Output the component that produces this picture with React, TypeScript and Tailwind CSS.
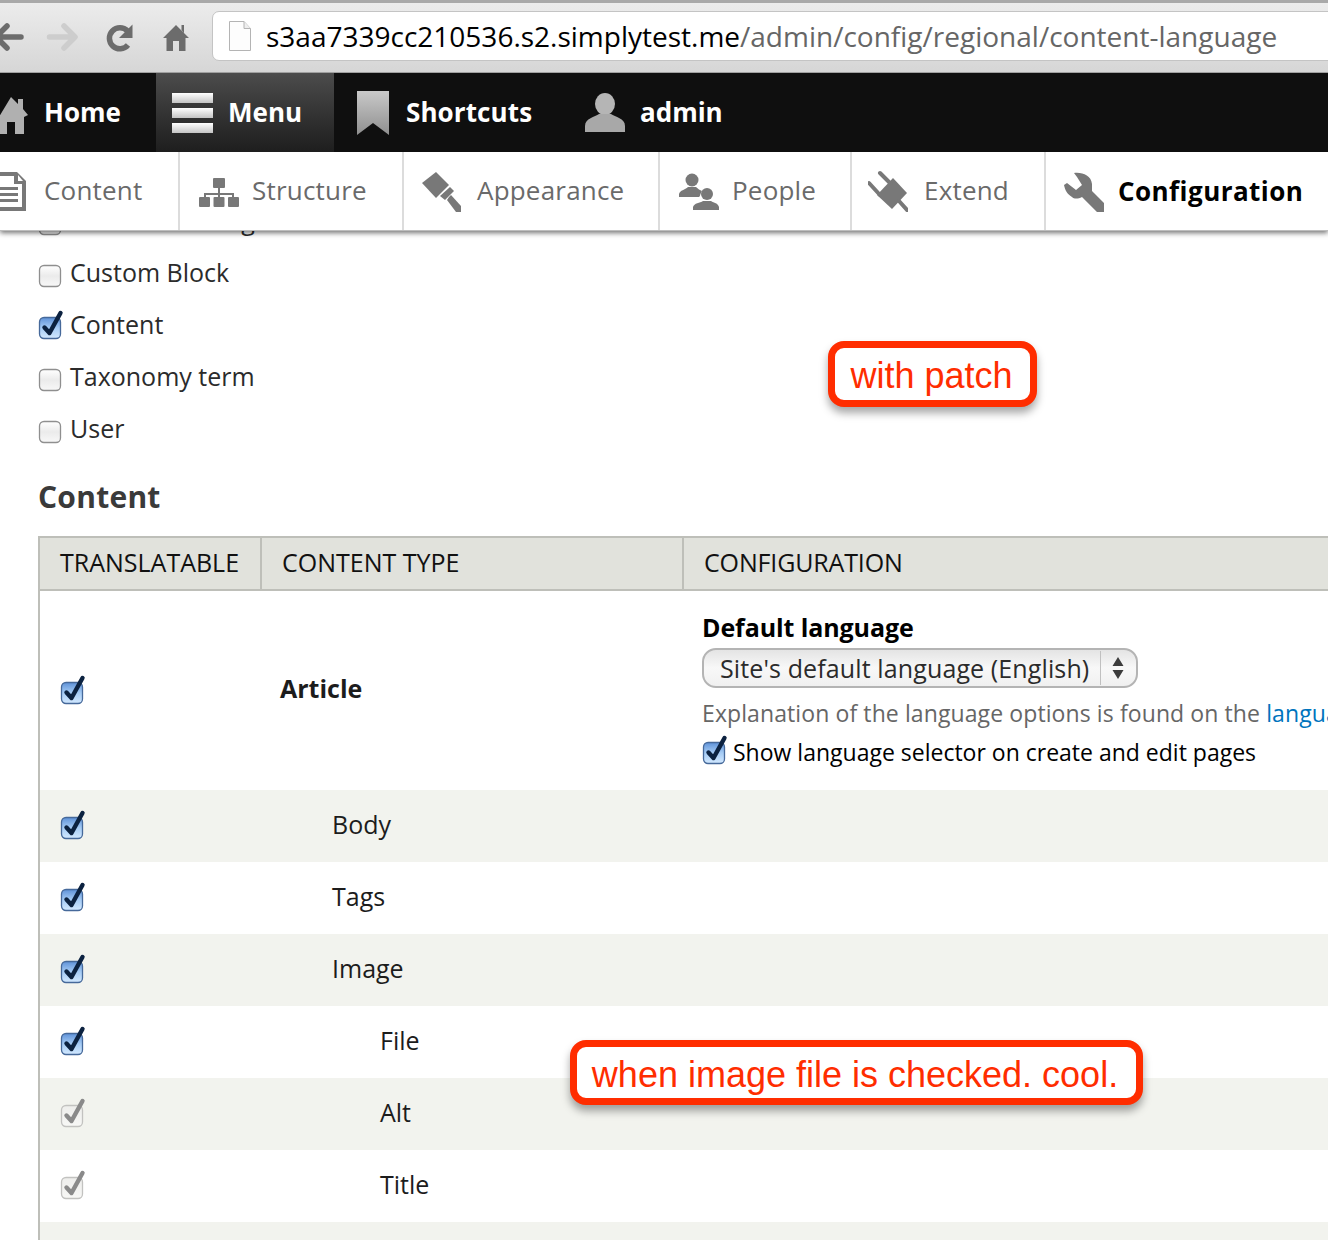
import React from "react";

function Check({ state = "off" }: { state?: "off" | "on" | "disabled" }) {
  const id = React.useId();
  const stops =
    state === "on"
      ? ["#5f92d8", "#a6ccf5", "#d3e9ff"]
      : state === "disabled"
      ? ["#eeeeec", "#f2f2f0", "#f8f8f6"]
      : ["#ffffff", "#ebebeb", "#f8f8f8"];
  const border = state === "on" ? "#46699a" : state === "disabled" ? "#c2c2c0" : "#8f8f8f";
  return (
    <svg width="28" height="32" viewBox="0 0 28 32" className="block shrink-0">
      <defs>
        <linearGradient id={id} x1="0" y1="0" x2="0" y2="1">
          <stop offset="0" stopColor={stops[0]} />
          <stop offset="0.5" stopColor={stops[1]} />
          <stop offset="1" stopColor={stops[2]} />
        </linearGradient>
      </defs>
      <rect x="1.5" y="8.5" width="21" height="21" rx="4.5" fill={`url(#${id})`} stroke={border} strokeWidth="1.3" />
      {state !== "off" && (
        <path
          d="M6.5 18.5 L11.5 24 L22.5 4"
          fill="none"
          stroke={state === "on" ? "#0c2240" : "#8a8a8a"}
          strokeWidth="4.4"
          strokeLinecap="round"
          strokeLinejoin="round"
        />
      )}
    </svg>
  );
}

function ToolbarIcon({ kind }: { kind: string }) {
  if (kind === "home")
    return (
      <svg width="32" height="44" viewBox="0 0 32 44" className="block shrink-0">
        <path d="M14 6 L21 13 V8 H26 V18 L31 24 L27 26 V43 H18 V31 H10 V43 H2 V26 Z" fill="#b0b0b0" />
      </svg>
    );
  if (kind === "menu")
    return (
      <svg width="42" height="42" viewBox="0 0 42 42" className="block shrink-0">
        <defs>
          <linearGradient id="mbar" x1="0" y1="0" x2="0" y2="1">
            <stop offset="0" stopColor="#ffffff" />
            <stop offset="1" stopColor="#c4c4c4" />
          </linearGradient>
        </defs>
        <rect x="0" y="1" width="41" height="10" fill="url(#mbar)" />
        <rect x="0" y="16" width="41" height="10" fill="url(#mbar)" />
        <rect x="0" y="31" width="41" height="10" fill="url(#mbar)" />
      </svg>
    );
  if (kind === "bookmark")
    return (
      <svg width="34" height="46" viewBox="0 0 34 46" className="block shrink-0">
        <defs>
          <linearGradient id="bm" x1="0" y1="0" x2="0" y2="1">
            <stop offset="0" stopColor="#c9c9c9" />
            <stop offset="1" stopColor="#8f8f8f" />
          </linearGradient>
        </defs>
        <path d="M1 1 H33 V45 L17 33 L1 45 Z" fill="url(#bm)" />
      </svg>
    );
  return (
    <svg width="40" height="40" viewBox="0 0 40 40" className="block shrink-0">
      <ellipse cx="20" cy="11" rx="10" ry="11" fill="#b5b5b5" />
      <path d="M0 33 C0 25 10 24 14 21 H26 C30 24 40 25 40 33 V39 H0 Z" fill="#a8a8a8" />
    </svg>
  );
}

function TrayIcon({ kind }: { kind: string }) {
  const c = "#787878";
  const wrap = (w: number, children: React.ReactNode) => (
    <svg width={w} height="42" viewBox={`0 0 ${w} 42`} className="block shrink-0">
      {children}
    </svg>
  );
  if (kind === "content")
    return wrap(
      27,
      <>
        <path d="M0 2 H17 L26 11 V41 H0 Z" fill={c} />
        <path d="M18 5 L23 11 H18 Z" fill="#fff" />
        <path d="M0 6 H14 V14 H22 V37 H0 Z" fill="#fff" />
        <path d="M0 17 H18 V20 H0 Z M0 23 H18 V26 H0 Z M0 29 H18 V32 H0 Z" fill={c} />
      </>
    );
  if (kind === "structure")
    return wrap(
      40,
      <>
        <rect x="14" y="8" width="12" height="10" rx="1" fill={c} />
        <path d="M19 18 H21 V23 H35 V28 H33 V25 H21 V28 H19 V25 H7 V28 H5 V23 H19 Z" fill={c} />
        <rect x="0" y="27" width="11" height="10" rx="1" fill={c} />
        <rect x="14.5" y="27" width="11" height="10" rx="1" fill={c} />
        <rect x="29" y="27" width="11" height="10" rx="1" fill={c} />
      </>
    );
  if (kind === "appearance")
    return wrap(
      40,
      <>
        <path d="M0 13 L14 2 L27 15 L14 28 Z" fill={c} />
        <path d="M18 26 L28 17 L32 21 L23 30 Z" fill={c} />
        <path d="M27 27 L29 25 L39 36 V42 H34 L25 30 Z" fill={c} />
      </>
    );
  if (kind === "people")
    return wrap(
      40,
      <>
        <circle cx="13" cy="10" r="6.5" fill={c} />
        <path d="M0 27 V24 C1 20 6 20 9 17 H17 C19 19 21 20 23 21 C21 24 21 27 20 27 Z" fill={c} />
        <circle cx="28" cy="24" r="6" fill={c} />
        <path d="M14 40 V37 C15 33 21 33 24 31 H32 C35 33 39 33 40 37 V40 Z" fill={c} />
      </>
    );
  if (kind === "extend")
    return wrap(
      40,
      <>
        <path d="M25 8 L39 23 L24 39 L9 25 Z" fill={c} />
        <path d="M1 13 L12 25 M12 3 L23 14 M31 31 L39 40" stroke={c} strokeWidth="4" strokeLinecap="round" />
      </>
    );
  return wrap(
    40,
    <path
      d="M10 3 C18 2 27 5 28 14 L28 21 L40 33 V42 H33 L18 27 C14 29 10 29 8 27 C3 24 1 20 0 15 L3 13 L12 20 L18 15 L13 7 Z"
      fill={c}
    />
  );
}

const tray = [
  { k: "content", t: "Content", w: "w-[180px]", pl: "pl-0", gap: "gap-[17px]" },
  { k: "structure", t: "Structure", w: "w-[224px]", pl: "pl-[19px]", gap: "gap-[13px]" },
  { k: "appearance", t: "Appearance", w: "w-[256px]", pl: "pl-[18px]", gap: "gap-[15px]" },
  { k: "people", t: "People", w: "w-[192px]", pl: "pl-[19px]", gap: "gap-[13px]" },
  { k: "extend", t: "Extend", w: "w-[194px]", pl: "pl-[16px]", gap: "gap-[16px]" },
];

const rows: { label: string; pad: string; state: "on" | "disabled"; bg: string }[] = [
  { label: "Body", pad: "pl-[70px]", state: "on", bg: "bg-[#f2f3ee]" },
  { label: "Tags", pad: "pl-[70px]", state: "on", bg: "bg-white" },
  { label: "Image", pad: "pl-[70px]", state: "on", bg: "bg-[#f2f3ee]" },
  { label: "File", pad: "pl-[118px]", state: "on", bg: "bg-white" },
  { label: "Alt", pad: "pl-[118px]", state: "disabled", bg: "bg-[#f2f3ee]" },
  { label: "Title", pad: "pl-[118px]", state: "disabled", bg: "bg-white" },
  { label: "", pad: "pl-[118px]", state: "disabled", bg: "bg-[#f2f3ee]" },
];

export default function App() {
  return (
    <div className="relative w-[1328px] h-[1240px] overflow-hidden bg-white font-['Open_Sans',sans-serif] text-[#2b2b2b]">
      {/* browser chrome */}
      <div className="relative z-30 h-[73px] bg-gradient-to-b from-[#ececec] to-[#d6d6d6] border-t-[3px] border-t-[#a9a9a9] border-b border-b-[#a0a0a0] flex items-center">
        <svg width="210" height="50" viewBox="0 12 210 50" className="block shrink-0 -mt-[2px]">
          <path d="M-4 37 H21 M7 26 L-4 37 L7 48" stroke="#6c6c6c" strokeWidth="5.5" strokeLinecap="round" strokeLinejoin="round" fill="none" />
          <path d="M49.5 37 H74 M64 26 L75 37 L64 48" stroke="#cdcdcd" strokeWidth="5.5" strokeLinecap="round" strokeLinejoin="round" fill="none" />
          <path d="M127.5 31 A10.5 10.5 0 1 0 128 45" stroke="#6c6c6c" strokeWidth="5.5" fill="none" />
          <path d="M132.5 24.5 V38 H119 Z" fill="#6c6c6c" />
          <path d="M176 25 L189 38 H185.5 V51 H179 V41 H173 V51 H166.5 V38 H163 Z M181.5 25 H184 V33 L181.5 30 Z" fill="#6c6c6c" />
        </svg>
        <div className="flex items-center ml-[2px] h-[50px] w-[1200px] shrink-0 -mt-[3px] bg-white border border-[#c4c4c4] rounded-[7px] pl-[16px]">
          <svg width="22" height="30" viewBox="0 0 22 30" className="block shrink-0">
            <path d="M0.5 0.5 H15 L21.5 7.5 V29.5 H0.5 Z" fill="#fdfdfd" stroke="#b4b4b4" />
            <path d="M15 0.5 V7.5 H21.5" fill="#eee" stroke="#b4b4b4" />
          </svg>
          <span className="ml-[15px] text-[28px] leading-none whitespace-nowrap text-[#666666]">
            <span className="text-black">s3aa7339cc210536.s2.simplytest.me</span>/admin/config/regional/content-language
          </span>
        </div>
      </div>

      {/* toolbar */}
      <div className="relative z-30 h-[79px] bg-[#0f0f0f] flex items-stretch text-white font-bold text-[26px]">
        <div className="w-[156px] flex items-center -ml-[3px] gap-[15px]">
          <ToolbarIcon kind="home" />
          <span>Home</span>
        </div>
        <div className="w-[178px] flex items-center pl-[16px] gap-[14px] bg-gradient-to-b from-[#4c4c4c] to-[#1e1e1e] ml-[3px]">
          <ToolbarIcon kind="menu" />
          <span>Menu</span>
        </div>
        <div className="w-[251px] flex items-center pl-[22px] gap-[16px]">
          <ToolbarIcon kind="bookmark" />
          <span className="tracking-[0.1px]">Shortcuts</span>
        </div>
        <div className="flex items-center gap-[15px]">
          <ToolbarIcon kind="user" />
          <span>admin</span>
        </div>
      </div>

      {/* tray */}
      <div className="relative z-20 h-[79px] bg-white flex items-stretch shadow-[0_2px_5px_rgba(0,0,0,0.55)] border-b border-b-[#bdbdbd] text-[26px] text-[#6a6a6a] tracking-[0.2px]">
        {tray.map((i) => (
          <div key={i.k} className={`${i.w} ${i.pl} ${i.gap} flex items-center border-r-2 border-r-[#dcdcdc] -mt-px`}>
            <TrayIcon kind={i.k} />
            <span>{i.t}</span>
          </div>
        ))}
        <div className="flex items-center pl-[18px] gap-[14px] text-black font-bold tracking-[0.45px]">
          <TrayIcon kind="configuration" />
          <span>Configuration</span>
        </div>
      </div>

      {/* content */}
      <div className="relative z-10 -mt-[37px] pl-[38px]">
        {[
          { t: "Contact message", s: "off" as const },
          { t: "Custom Block", s: "off" as const },
          { t: "Content", s: "on" as const },
          { t: "Taxonomy term", s: "off" as const },
          { t: "User", s: "off" as const },
        ].map((r) => (
          <div key={r.t} className="flex items-end h-[52px] gap-[4px] text-[25px] leading-[52px] text-[#2b2b2b]">
            <div className="pb-[9px]">
              <Check state={r.s} />
            </div>
            <span>{r.t}</span>
          </div>
        ))}

        <h2 className="mt-[23px] h-[40px] text-[30px] leading-[40px] font-bold tracking-[0.25px] text-[#3a3a3a]">Content</h2>

        {/* table */}
        <div className="mt-[19px] w-[1400px] border-l-2 border-l-[#bebfb9]">
          <div className="grid grid-cols-[222px_422px_1fr] h-[55px] -ml-[2px] bg-[#e1e2dc] border-2 border-[#bebfb9] text-[25px] text-[#111111] leading-[49px]">
            <div className="pl-[20px] border-r-2 border-r-[#bebfb9]">TRANSLATABLE</div>
            <div className="pl-[20px] border-r-2 border-r-[#bebfb9]">CONTENT TYPE</div>
            <div className="pl-[20px] tracking-[-0.15px]">CONFIGURATION</div>
          </div>

          <div className="grid grid-cols-[222px_422px_1fr] h-[199px] items-center bg-white">
            <div className="pl-[20px] -mt-[1px]">
              <Check state="on" />
            </div>
            <div className="pl-[18px] -mt-[3px] text-[25px] font-bold text-[#1c1c1c]">Article</div>
            <div className="pl-[18px] pt-[2px] whitespace-nowrap">
              <div className="text-[25px] font-bold leading-[32px] tracking-[-0.1px] text-black -mt-[3px]">Default language</div>
              <div className="mt-[5px] flex items-center w-[436px] h-[40px] rounded-[14px] border-2 border-[#b4b4b4] bg-gradient-to-b from-[#e4e4e4] via-[#f8f8f8] to-[#f0f0f0] text-[25px] text-[#2b2b2b]">
                <span className="pl-[16px] w-[397px] leading-[34px] tracking-[0.12px] border-r border-r-[#c0c0c0]">Site's default language (English)</span>
                <svg width="12" height="28" viewBox="0 0 12 28" className="block ml-[11px]">
                  <path d="M6 3 L11.5 12 H0.5 Z M6 25 L11.5 16 H0.5 Z" fill="#3c3c3c" />
                </svg>
              </div>
              <div className="mt-[7px] text-[23px] leading-[36px] tracking-[0.1px] text-[#666666]">
                Explanation of the language options is found on the <span className="text-[#0074bd]">language selection page</span>.
              </div>
              <div className="mt-[3px] flex items-end text-[23px] leading-[36px] text-black">
                <div className="pb-[4px]">
                  <Check state="on" />
                </div>
                <span className="ml-[3px]">Show language selector on create and edit pages</span>
              </div>
            </div>
          </div>

          {rows.map((r, idx) => (
            <div key={idx} className={`grid grid-cols-[222px_1fr] h-[72px] items-center ${r.bg}`}>
              <div className="pl-[20px] -mt-[2px]">
                <Check state={r.state} />
              </div>
              <div className={`${r.pad} text-[25px] text-[#1c1c1c] -mt-[3px]`}>{r.label}</div>
            </div>
          ))}
        </div>
      </div>

      {/* annotations */}
      <div className="absolute z-40 left-[828px] top-[341px] w-[209px] h-[66px] pt-[3px] rounded-[16px] border-[7px] border-[#ff2d00] bg-white shadow-[0_6px_8px_rgba(0,0,0,0.35)] flex items-center justify-center font-['Liberation_Sans',sans-serif] text-[36px] leading-none text-[#ff2d00] whitespace-nowrap">
        <span className="-ml-[2px]">with patch</span>
      </div>
      <div className="absolute z-40 left-[570px] top-[1040px] w-[573px] h-[65px] pt-[4px] rounded-[16px] border-[7px] border-[#ff2d00] bg-white shadow-[0_6px_8px_rgba(0,0,0,0.35)] flex items-center justify-center font-['Liberation_Sans',sans-serif] text-[36px] leading-none text-[#ff2d00] whitespace-nowrap">
        <span className="-ml-[3px]">when image file is checked. cool.</span>
      </div>
    </div>
  );
}
